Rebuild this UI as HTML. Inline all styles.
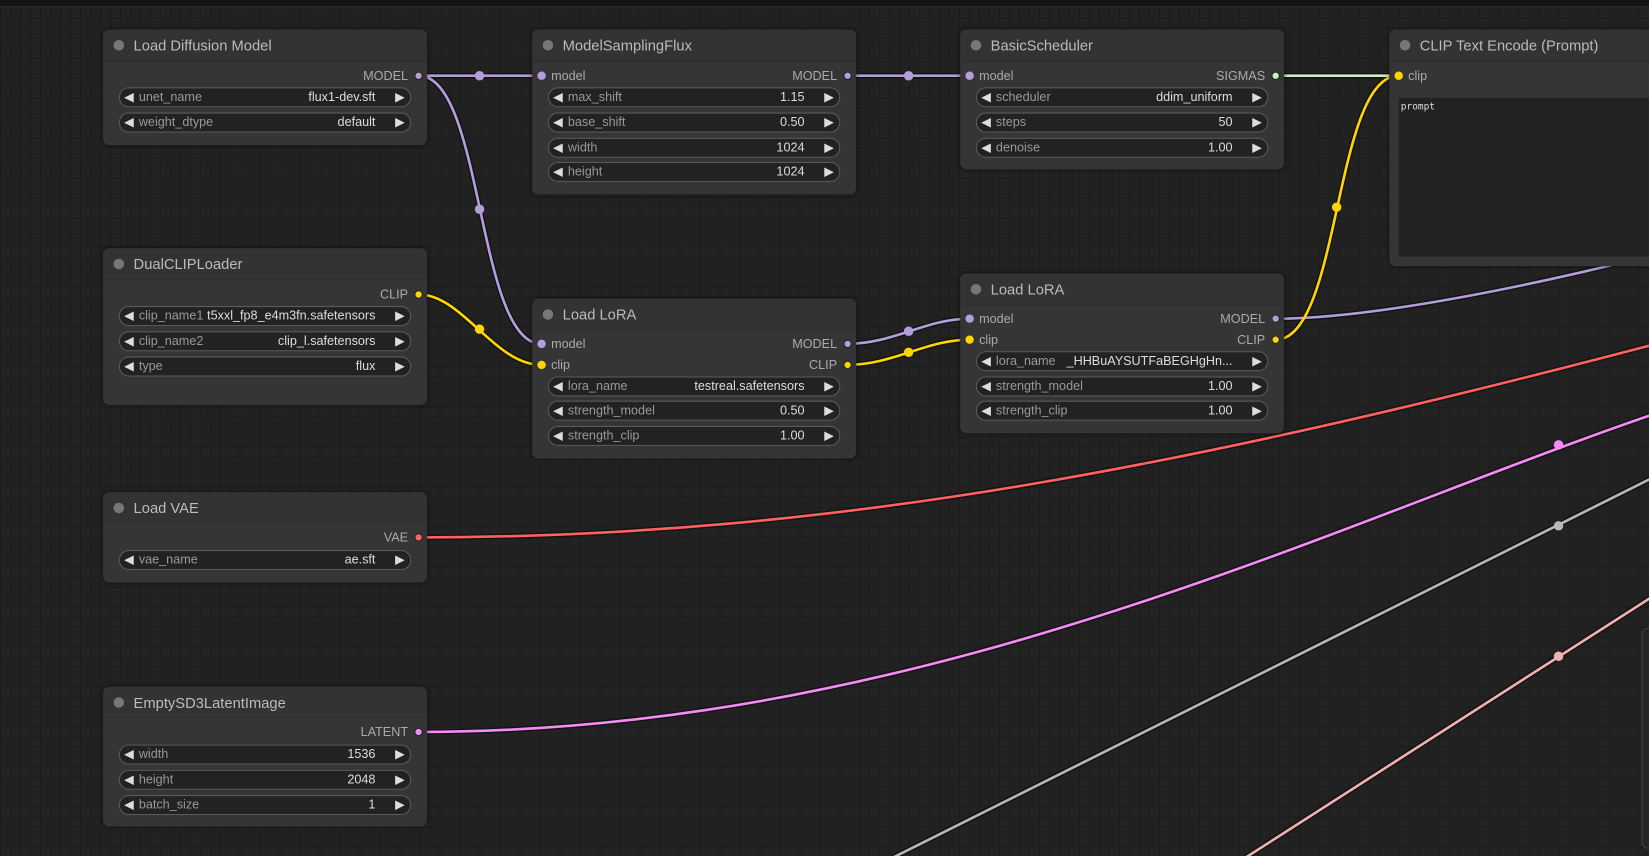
<!DOCTYPE html>
<html><head><meta charset="utf-8"><style>
*{margin:0;padding:0;box-sizing:border-box}
html,body{width:1649px;height:856px;overflow:hidden;background:#222;font-family:"Liberation Sans",sans-serif}
#s{position:absolute;left:0;top:0;width:1568px;height:814px;overflow:hidden;transform:scale(1.05166);transform-origin:0 0;
background-color:#222;
background-image:linear-gradient(#1c1c1c 1px,transparent 1px),linear-gradient(90deg,#1c1c1c 1px,transparent 1px);
background-size:9.5px 9.5px;background-position:0 7px}
#top{position:absolute;left:0;top:0;width:1568px;height:7px;background:#141414;border-bottom:1px solid #333}
svg{position:absolute;left:0;top:0}
.n{position:absolute;background:#353535;border-radius:6px;box-shadow:0 0 4px rgba(0,0,0,.5)}
.t{height:30px;border-bottom:1px solid #2e2e2e;background:#333;border-radius:6px 6px 0 0;color:#bbb;font-size:14px;line-height:30px;padding-left:29px;position:relative}
.t:before{content:"";position:absolute;left:10px;top:10px;width:10px;height:10px;border-radius:50%;background:#777}
.w{position:absolute;left:15px;right:15px;height:19px;border:1px solid #5a5a5a;border-radius:10px;background:#222;font-size:12px;line-height:17px;color:#999}
.w .l{position:absolute;left:4px;top:0;color:#ddd}
.w .lb{position:absolute;left:18px;top:0}
.w .v{position:absolute;right:33px;top:0;color:#ddd}
.w .r{position:absolute;right:5px;top:0;color:#ddd}
.o{position:absolute;right:18px;font-size:12px;color:#aaa;line-height:14px}
.i{position:absolute;left:18px;font-size:12px;color:#aaa;line-height:14px}
.d{position:absolute;width:8px;height:8px;border-radius:50%}
</style></head><body><div id="s">
<div id="top"></div>
<svg width="1568" height="814">
<g fill="none" stroke-linecap="round">
<g stroke="#111" stroke-width="5">
<path d="M398 72 L515 72"/><path d="M398 72 C460 72 453 327 515 327"/><path d="M805 72 L922 72"/><path d="M805 327 C850 327 880 303 922 303"/>
<path d="M1213 303 C1300 303 1450 275 1620 230"/><path d="M398 280 C440 280 470 347 515 347"/><path d="M805 347 C850 347 880 323 922 323"/>
<path d="M1213 323 C1275 323 1268 72 1330 72"/><path d="M1213 72 L1330 72"/>
<path d="M398 511 C800 511 1150 440 1620 315"/><path d="M398 696 C900 696 1300 480 1620 378"/>
<path d="M700 890 L1700 390"/><path d="M1062 894 L1620 536"/>
</g>
<g stroke-width="2.5">
<path stroke="#b39ddb" d="M398 72 L515 72"/><path stroke="#b39ddb" d="M398 72 C460 72 453 327 515 327"/><path stroke="#b39ddb" d="M805 72 L922 72"/><path stroke="#b39ddb" d="M805 327 C850 327 880 303 922 303"/>
<path stroke="#b39ddb" d="M1213 303 C1300 303 1450 275 1620 230"/><path stroke="#ffd500" d="M398 280 C440 280 470 347 515 347"/><path stroke="#ffd500" d="M805 347 C850 347 880 323 922 323"/>
<path stroke="#ffd500" d="M1213 323 C1275 323 1268 72 1330 72"/><path stroke="#c8f0c0" d="M1213 72 L1330 72"/>
<path stroke="#ff6060" d="M398 511 C800 511 1150 440 1620 315"/><path stroke="#f58cf5" d="M398 696 C900 696 1300 480 1620 378"/>
<path stroke="#b8b8b8" d="M700 890 L1700 390"/><path stroke="#f0b0b0" d="M1062 894 L1620 536"/>
</g></g>
<g>
<circle cx="456" cy="72" r="4.5" fill="#b39ddb"/><circle cx="456" cy="199" r="4.5" fill="#b39ddb"/><circle cx="864" cy="72" r="4.5" fill="#b39ddb"/><circle cx="864" cy="315" r="4.5" fill="#b39ddb"/>
<circle cx="456" cy="313" r="4.5" fill="#ffd500"/><circle cx="864" cy="335" r="4.5" fill="#ffd500"/><circle cx="1271" cy="197" r="4.5" fill="#ffd500"/>
<circle cx="1482" cy="423" r="4.5" fill="#f58cf5"/><circle cx="1482" cy="500" r="4.5" fill="#b8b8b8"/><circle cx="1482" cy="624" r="4.5" fill="#f0b0b0"/>
</g></svg>

<div style="position:absolute;left:1561px;top:597px;width:20px;height:210px;border:1px solid #444;border-radius:6px;background:#252525"></div>

<div class="n" style="left:98px;top:28px;width:308px;height:110px">
<div class="t">Load Diffusion Model</div>
<div class="o" style="top:37px">MODEL</div><div class="d" style="right:4px;top:40px;background:#b39ddb;border:1px solid #222"></div>
<div class="w" style="top:55px"><span class="l">◀</span><span class="lb">unet_name</span><span class="v">flux1-dev.sft</span><span class="r">▶</span></div>
<div class="w" style="top:79px"><span class="l">◀</span><span class="lb">weight_dtype</span><span class="v">default</span><span class="r">▶</span></div>
</div>

<div class="n" style="left:506px;top:28px;width:308px;height:157px">
<div class="t">ModelSamplingFlux</div>
<div class="d" style="left:5px;top:40px;background:#b39ddb"></div><div class="i" style="top:37px">model</div>
<div class="o" style="top:37px">MODEL</div><div class="d" style="right:4px;top:40px;background:#b39ddb;border:1px solid #222"></div>
<div class="w" style="top:55px"><span class="l">◀</span><span class="lb">max_shift</span><span class="v">1.15</span><span class="r">▶</span></div>
<div class="w" style="top:79px"><span class="l">◀</span><span class="lb">base_shift</span><span class="v">0.50</span><span class="r">▶</span></div>
<div class="w" style="top:103px"><span class="l">◀</span><span class="lb">width</span><span class="v">1024</span><span class="r">▶</span></div>
<div class="w" style="top:126px"><span class="l">◀</span><span class="lb">height</span><span class="v">1024</span><span class="r">▶</span></div>
</div>

<div class="n" style="left:913px;top:28px;width:308px;height:133px">
<div class="t">BasicScheduler</div>
<div class="d" style="left:5px;top:40px;background:#b39ddb"></div><div class="i" style="top:37px">model</div>
<div class="o" style="top:37px">SIGMAS</div><div class="d" style="right:4px;top:40px;background:#c8f0c0;border:1px solid #222"></div>
<div class="w" style="top:55px"><span class="l">◀</span><span class="lb">scheduler</span><span class="v">ddim_uniform</span><span class="r">▶</span></div>
<div class="w" style="top:79px"><span class="l">◀</span><span class="lb">steps</span><span class="v">50</span><span class="r">▶</span></div>
<div class="w" style="top:103px"><span class="l">◀</span><span class="lb">denoise</span><span class="v">1.00</span><span class="r">▶</span></div>
</div>

<div class="n" style="left:1321px;top:28px;width:300px;height:225px">
<div class="t">CLIP Text Encode (Prompt)</div>
<div class="d" style="left:5px;top:40px;background:#ffd500"></div><div class="i" style="top:37px">clip</div>
<div style="position:absolute;left:9px;top:65px;right:0;height:151px;background:#222;font-family:'DejaVu Sans Mono',monospace;font-size:9px;color:#ddd;padding:4px 2px">prompt</div>
</div>

<div class="n" style="left:98px;top:236px;width:308px;height:149px">
<div class="t">DualCLIPLoader</div>
<div class="o" style="top:37px">CLIP</div><div class="d" style="right:4px;top:40px;background:#ffd500;border:1px solid #222"></div>
<div class="w" style="top:55px"><span class="l">◀</span><span class="lb">clip_name1</span><span class="v">t5xxl_fp8_e4m3fn.safetensors</span><span class="r">▶</span></div>
<div class="w" style="top:79px"><span class="l">◀</span><span class="lb">clip_name2</span><span class="v">clip_l.safetensors</span><span class="r">▶</span></div>
<div class="w" style="top:103px"><span class="l">◀</span><span class="lb">type</span><span class="v">flux</span><span class="r">▶</span></div>
</div>

<div class="n" style="left:506px;top:284px;width:308px;height:152px">
<div class="t">Load LoRA</div>
<div class="d" style="left:5px;top:39px;background:#b39ddb"></div><div class="i" style="top:36px">model</div>
<div class="d" style="left:5px;top:59px;background:#ffd500"></div><div class="i" style="top:56px">clip</div>
<div class="o" style="top:36px">MODEL</div><div class="d" style="right:4px;top:39px;background:#b39ddb;border:1px solid #222"></div>
<div class="o" style="top:56px">CLIP</div><div class="d" style="right:4px;top:59px;background:#ffd500;border:1px solid #222"></div>
<div class="w" style="top:74px"><span class="l">◀</span><span class="lb">lora_name</span><span class="v">testreal.safetensors</span><span class="r">▶</span></div>
<div class="w" style="top:97px"><span class="l">◀</span><span class="lb">strength_model</span><span class="v">0.50</span><span class="r">▶</span></div>
<div class="w" style="top:121px"><span class="l">◀</span><span class="lb">strength_clip</span><span class="v">1.00</span><span class="r">▶</span></div>
</div>

<div class="n" style="left:913px;top:260px;width:308px;height:152px">
<div class="t">Load LoRA</div>
<div class="d" style="left:5px;top:39px;background:#b39ddb"></div><div class="i" style="top:36px">model</div>
<div class="d" style="left:5px;top:59px;background:#ffd500"></div><div class="i" style="top:56px">clip</div>
<div class="o" style="top:36px">MODEL</div><div class="d" style="right:4px;top:39px;background:#b39ddb;border:1px solid #222"></div>
<div class="o" style="top:56px">CLIP</div><div class="d" style="right:4px;top:59px;background:#ffd500;border:1px solid #222"></div>
<div class="w" style="top:74px"><span class="l">◀</span><span class="lb">lora_name</span><span class="v">_HHBuAYSUTFaBEGHgHn...</span><span class="r">▶</span></div>
<div class="w" style="top:98px"><span class="l">◀</span><span class="lb">strength_model</span><span class="v">1.00</span><span class="r">▶</span></div>
<div class="w" style="top:121px"><span class="l">◀</span><span class="lb">strength_clip</span><span class="v">1.00</span><span class="r">▶</span></div>
</div>

<div class="n" style="left:98px;top:468px;width:308px;height:86px">
<div class="t">Load VAE</div>
<div class="o" style="top:36px">VAE</div><div class="d" style="right:4px;top:39px;background:#ff6060;border:1px solid #222"></div>
<div class="w" style="top:55px"><span class="l">◀</span><span class="lb">vae_name</span><span class="v">ae.sft</span><span class="r">▶</span></div>
</div>

<div class="n" style="left:98px;top:653px;width:308px;height:133px">
<div class="t">EmptySD3LatentImage</div>
<div class="o" style="top:36px">LATENT</div><div class="d" style="right:4px;top:39px;background:#f58cf5;border:1px solid #222"></div>
<div class="w" style="top:55px"><span class="l">◀</span><span class="lb">width</span><span class="v">1536</span><span class="r">▶</span></div>
<div class="w" style="top:79px"><span class="l">◀</span><span class="lb">height</span><span class="v">2048</span><span class="r">▶</span></div>
<div class="w" style="top:103px"><span class="l">◀</span><span class="lb">batch_size</span><span class="v">1</span><span class="r">▶</span></div>
</div>
</div></body></html>
